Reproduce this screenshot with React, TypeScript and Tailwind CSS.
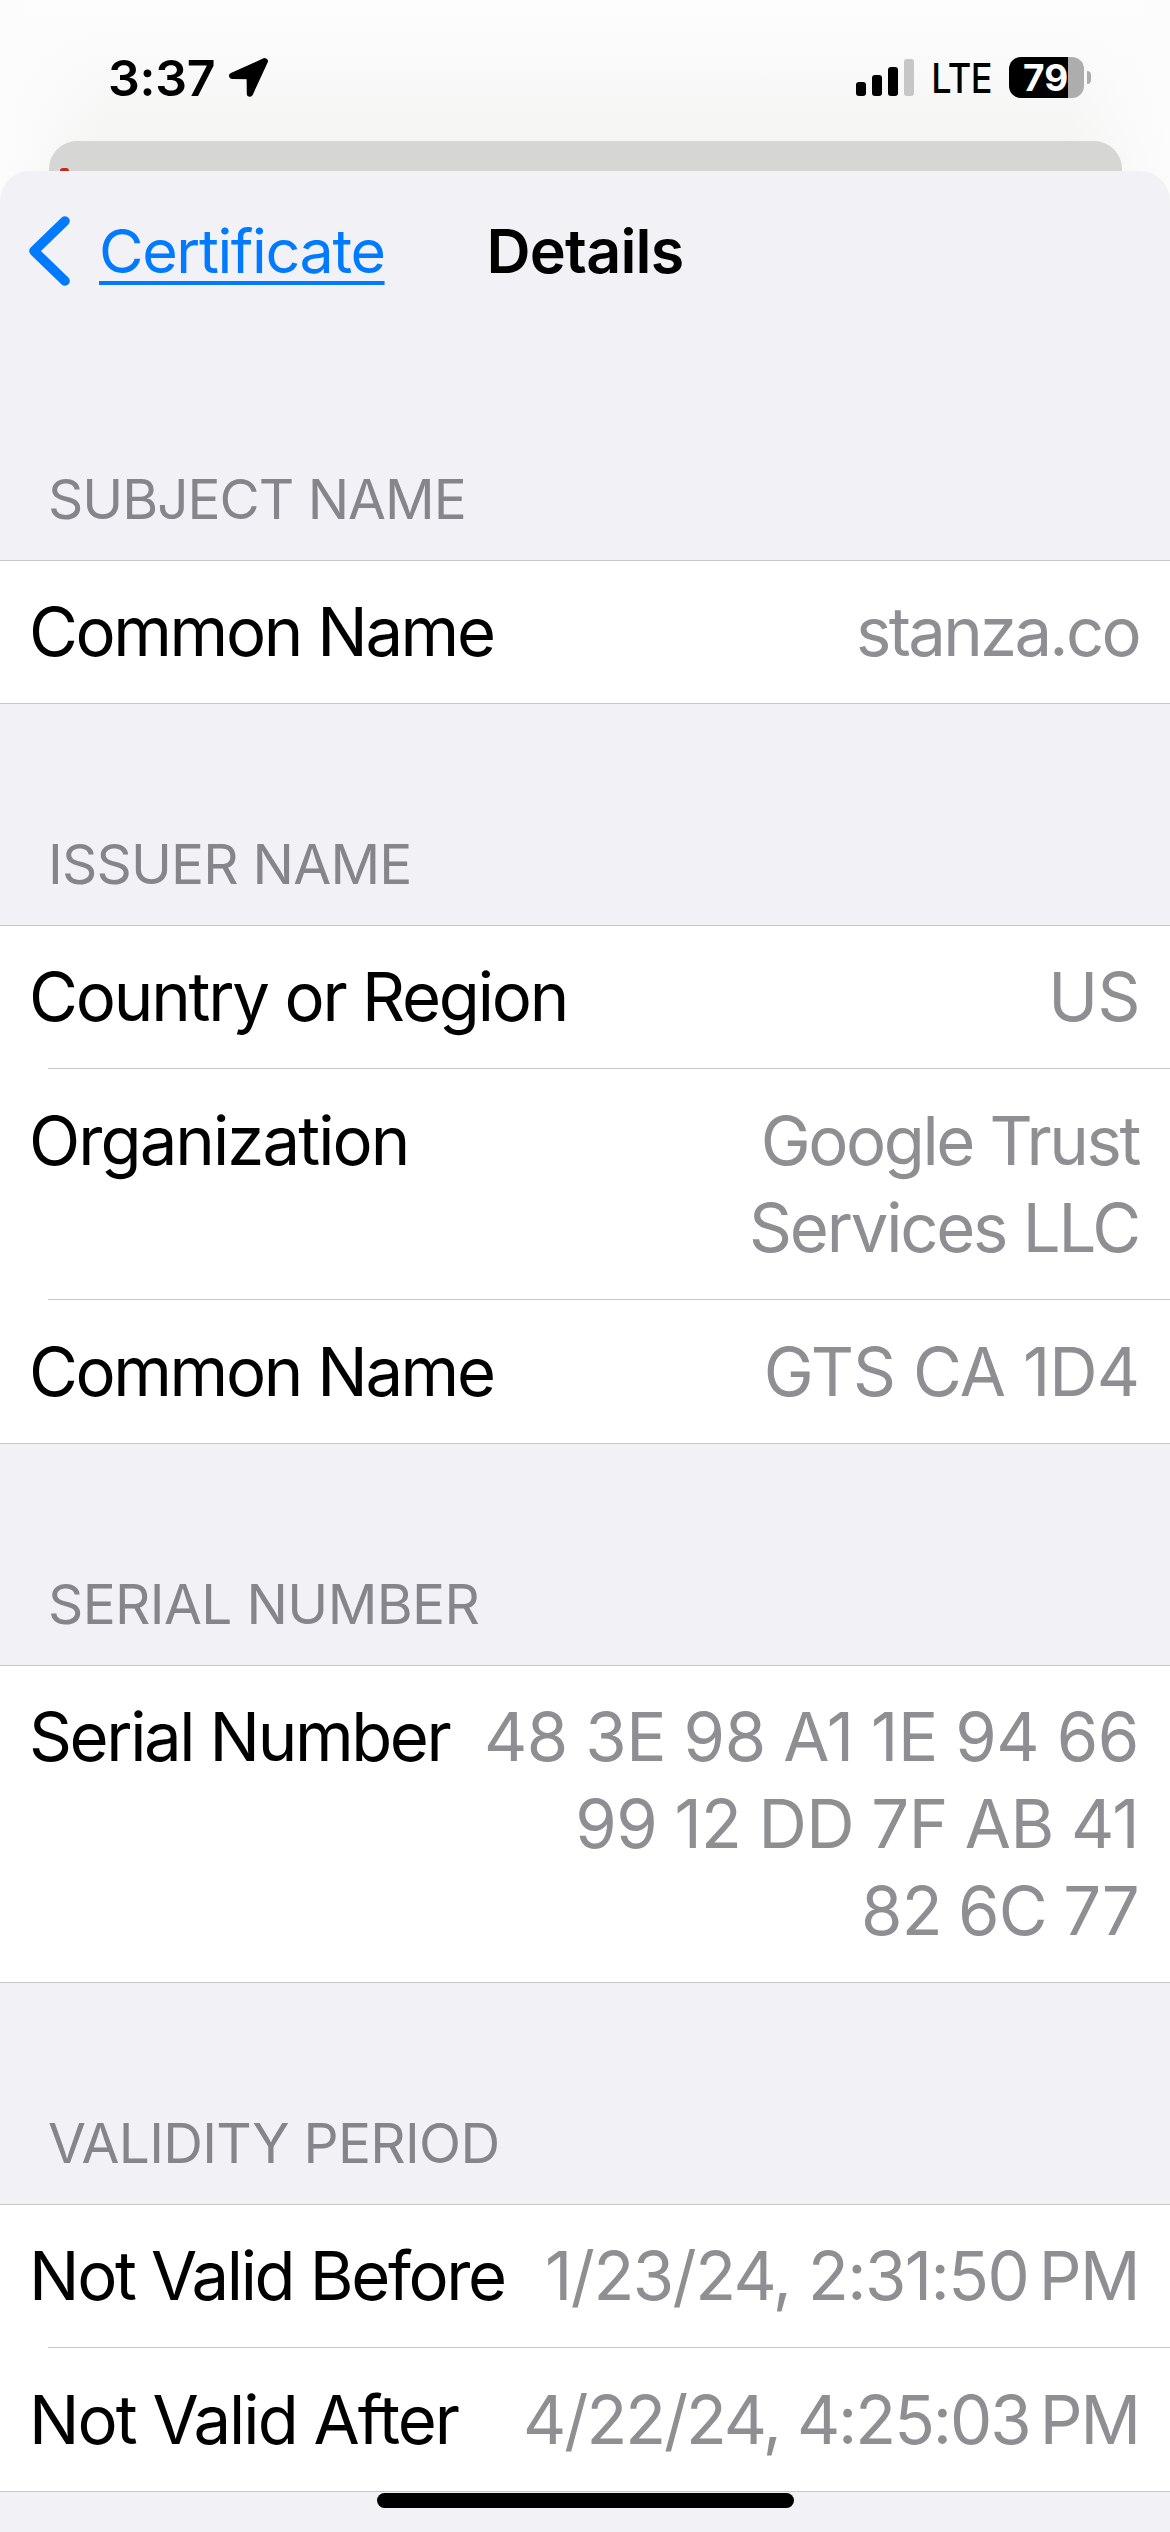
type Row = {
  label: string;
  labelStyle: string;
  lines: string[];
  valueStyle: string[];
  height: string;
};

const sections: { title: string; titleStyle: string; rows: Row[] }[] = [
  {
    title: 'SUBJECT NAME',
    titleStyle: 'tracking-[-1.02px]',
    rows: [
      {
        label: 'Common Name',
        labelStyle: 'tracking-[-2.4px]',
        lines: ['stanza.co'],
        valueStyle: ['tracking-[-2.7px]'],
        height: 'h-[142px]',
      },
    ],
  },
  {
    title: 'ISSUER NAME',
    titleStyle: 'tracking-[-0.8px]',
    rows: [
      {
        label: 'Country or Region',
        labelStyle: 'tracking-[-2.2px]',
        lines: ['US'],
        valueStyle: ['tracking-[-0.56px] -mr-px'],
        height: 'h-[142px]',
      },
      {
        label: 'Organization',
        labelStyle: 'tracking-[-1.92px]',
        lines: ['Google Trust', 'Services LLC'],
        valueStyle: ['tracking-[-2.4px]', 'tracking-[-2.22px]'],
        height: 'h-[230px]',
      },
      {
        label: 'Common Name',
        labelStyle: 'tracking-[-2.4px]',
        lines: ['GTS CA 1D4'],
        valueStyle: ['tracking-[-0.93px]'],
        height: 'h-[143px]',
      },
    ],
  },
  {
    title: 'SERIAL NUMBER',
    titleStyle: 'tracking-[-0.64px]',
    rows: [
      {
        label: 'Serial Number',
        labelStyle: 'tracking-[-2.38px]',
        lines: ['48 3E 98 A1 1E 94 66', '99 12 DD 7F AB 41', '82 6C 77'],
        valueStyle: [
          'tracking-[-0.4px] [word-spacing:-1px]',
          'tracking-[-0.6px] [word-spacing:-1px]',
          'tracking-[-0.7px] [word-spacing:-2px]',
        ],
        height: 'h-[316px]',
      },
    ],
  },
  {
    title: 'VALIDITY PERIOD',
    titleStyle: 'tracking-[-0.7px]',
    rows: [
      {
        label: 'Not Valid Before',
        labelStyle: 'tracking-[-2.34px]',
        lines: ['1/23/24, 2:31:50\u202fPM'],
        valueStyle: ['tracking-[-1.55px]'],
        height: 'h-[142px]',
      },
      {
        label: 'Not Valid After',
        labelStyle: 'tracking-[-1.96px]',
        lines: ['4/22/24, 4:25:03\u202fPM'],
        valueStyle: ['tracking-[-2.05px]'],
        height: 'h-[143px]',
      },
    ],
  },
];

const StatusBar = () => {
  return (
    <div className="flex h-[141px] items-center justify-between pt-[14px] pr-[79px] pl-[108px]">
      <div className="flex items-center gap-[14px]">
        <span className="text-[50px] leading-none font-semibold tracking-[-0.29px]">
          3:37
        </span>
        <svg width="39" height="39" viewBox="0 0 39 39">
          <path
            d="M35.8 3.2 3.2 17.9 20.7 18.1 20.9 35.6Z"
            stroke="#000"
            strokeWidth="6.2"
            strokeLinejoin="round"
          />
        </svg>
      </div>
      <div className="flex items-center gap-[19px]">
        <svg width="58" height="37" viewBox="0 0 58 37">
          <rect x="0" y="23" width="10" height="14" rx="3" />
          <rect x="16" y="16" width="10" height="21" rx="3" />
          <rect x="32" y="8" width="10" height="29" rx="3" />
          <rect x="48" y="0" width="10" height="37" rx="3" fill="#c6c6c6" />
        </svg>
        <span className="mt-[2px] flex w-[57px] justify-center">
          <span className="scale-x-[0.88] text-[41px] leading-none font-medium tracking-[-0.5px]">
            LTE
          </span>
        </span>
        <div className="flex items-center gap-[3px]">
          <div className="flex h-[41px] w-[75px] items-center rounded-[12px] bg-[linear-gradient(to_right,#000_59px,#adadad_59px)] pl-[14px] text-[37px] leading-[41px] font-bold text-white">
            79
          </div>
          <div className="h-[13px] w-[4px] rounded-r-full bg-[#adadad]" />
        </div>
      </div>
    </div>
  );
};

const NavBar = () => {
  return (
    <div className="grid h-[168px] grid-cols-[1fr_auto_1fr] items-center pb-2 text-[61px] leading-[80px]">
      <a className="flex items-center gap-[29px] pl-[29px] text-[#007aff]">
        <svg width="41" height="70" viewBox="0 0 41 70" fill="none">
          <path
            d="M36 5 5 35 36 65"
            stroke="currentColor"
            strokeWidth="9.6"
            strokeLinecap="round"
            strokeLinejoin="round"
          />
        </svg>
        <span className="tracking-[-1.38px] underline decoration-4 underline-offset-[8px] [text-decoration-skip-ink:none]">
          Certificate
        </span>
      </a>
      <h1 className="font-semibold tracking-[-0.77px]">Details</h1>
    </div>
  );
};

const DetailRow = ({ row, first }: { row: Row; first: boolean }) => {
  return (
    <>
      {!first && <div className="ml-12 h-px bg-[#c6c6c8]" />}
      <div
        className={`flex justify-between pr-[31px] pl-[29px] text-[67px] leading-[87px] whitespace-nowrap ${row.height} ${first ? 'pt-[27px]' : 'pt-[28px]'}`}
      >
        <span className={row.labelStyle}>{row.label}</span>
        <div className="text-right text-[#8e8e93]">
          {row.lines.map((line, index) => (
            <div key={line} className={row.valueStyle[index]}>
              {line}
            </div>
          ))}
        </div>
      </div>
    </>
  );
};

const App = () => {
  return (
    <div className="relative h-[2532px] w-[1170px] overflow-hidden bg-[#f3f5f2] font-['Inter',sans-serif] text-black">
      <div className="bg-linear-to-b from-[#fdfdfd] to-[#f3f5f2] to-[160px]">
        <div className="bg-[linear-gradient(to_right,#fcfcfc_0%,#fcfcfc00_9%,#fcfcfc00_91%,#fcfcfc_100%)]">
          <StatusBar />
          <div className="mx-[48.5px] h-[30px] rounded-t-[28px] bg-[#d6d7d4]">
            <div className="flex h-full items-end overflow-hidden pl-[11.5px]">
              <div className="h-[3px] w-[9px] rounded-t-full bg-[#c8281c]" />
            </div>
          </div>
          <div className="h-[2361px] rounded-t-[30px] bg-[#f2f1f6]">
            <NavBar />
            {sections.map((section) => (
              <section key={section.title}>
                <h2
                  className={`flex h-[221px] items-end pb-[28px] pl-12 text-[55px] leading-[66px] text-[#85858b] ${section.titleStyle}`}
                >
                  {section.title}
                </h2>
                <div className="border-y border-[#c6c6c8] bg-white">
                  {section.rows.map((row, index) => (
                    <DetailRow
                      key={row.label}
                      row={row}
                      first={index === 0}
                    />
                  ))}
                </div>
              </section>
            ))}
          </div>
        </div>
      </div>
      {/* home indicator */}
      <div className="absolute bottom-[24px] left-[377px] h-[15px] w-[417px] rounded-full bg-black" />
    </div>
  );
};

export default App;
